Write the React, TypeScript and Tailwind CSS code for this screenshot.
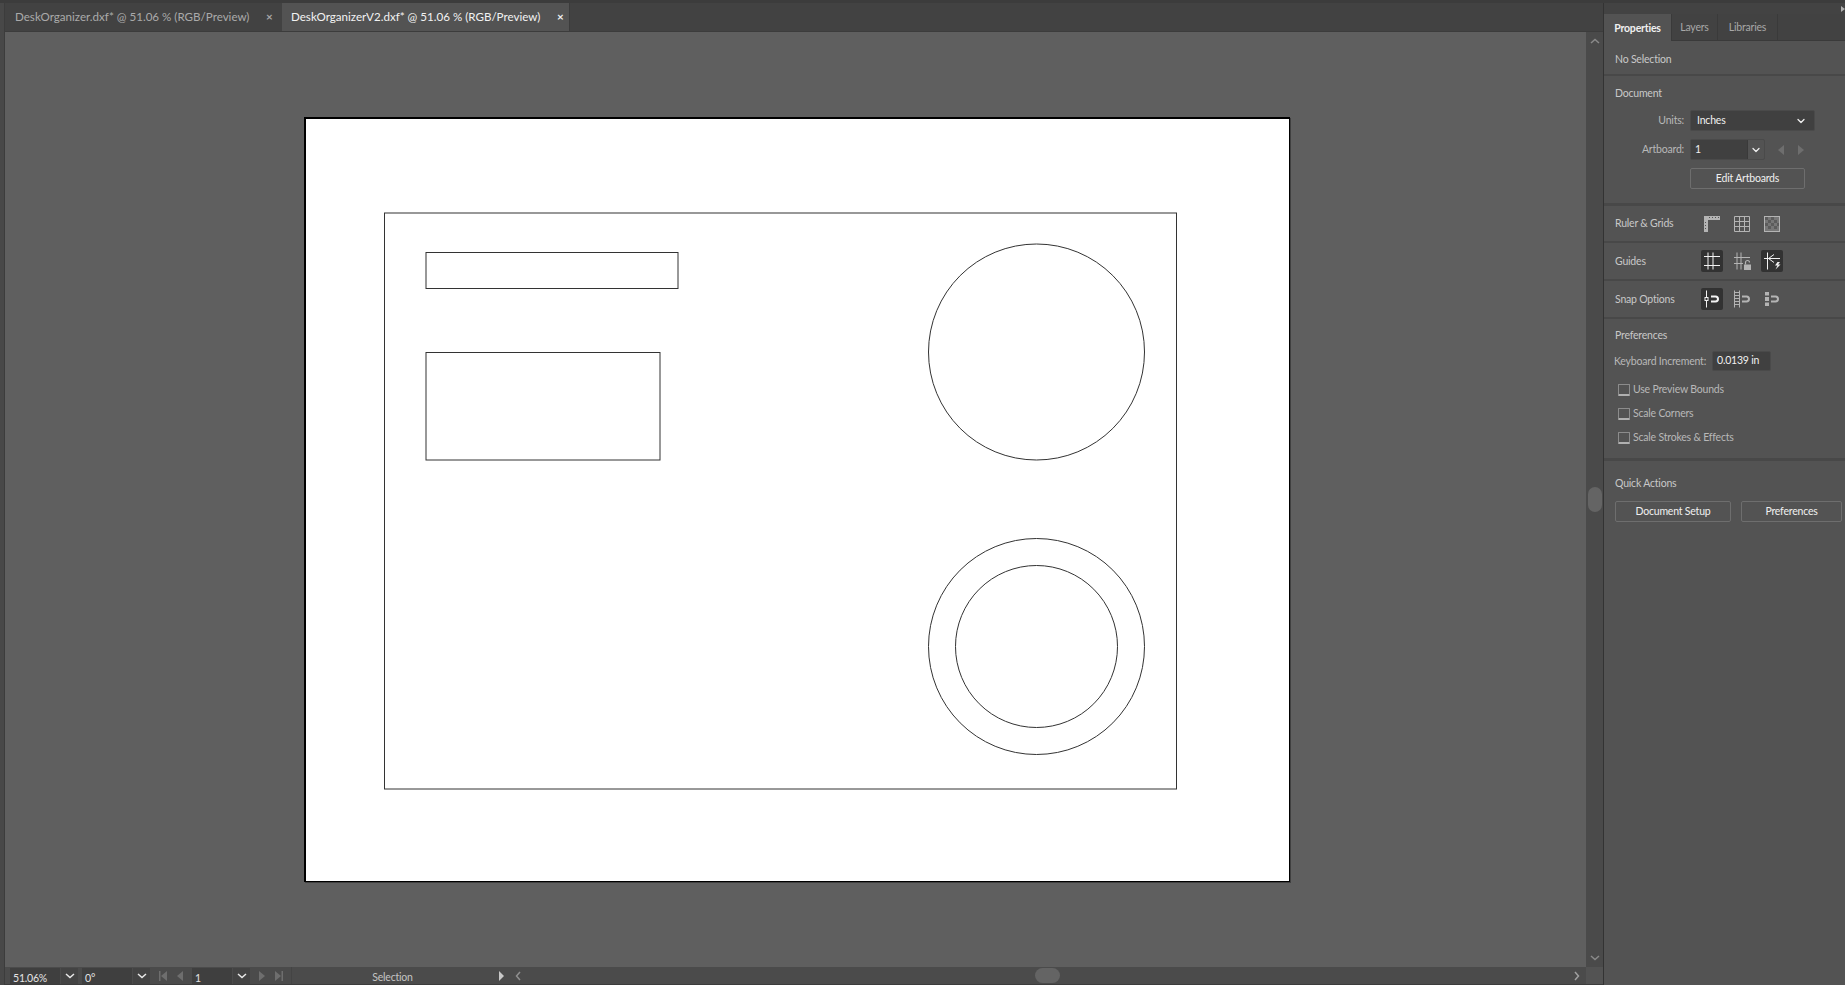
import React from 'react';
import { ChevronDown } from 'lucide-react';

const Chev = ({ className = '' }: { className?: string }) => (
  <svg width="10" height="6" viewBox="0 0 10 6" className={className} fill="none" stroke="currentColor" strokeWidth="1.5">
    <path d="M1 1l4 3.5L9 1" />
  </svg>
);

const Tri = ({ dir, bar = false }: { dir: 'l' | 'r'; bar?: boolean }) => (
  <svg width="9" height="10" viewBox="0 0 9 10" fill="#6e6e6e">
    {dir === 'l' ? <path d="M8 0v10L2 5z" /> : <path d="M1 0v10l6-5z" />}
    {bar && (dir === 'l' ? <rect x="0" y="0" width="1.5" height="10" /> : <rect x="7.5" y="0" width="1.5" height="10" />)}
  </svg>
);

const IconBox = ({ active = false, children }: { active?: boolean; children: React.ReactNode }) => (
  <div className={`w-[22px] h-[22px] rounded-[2px] flex items-center justify-center ${active ? 'bg-[#323232]' : ''}`}>
    <svg width="18" height="18" viewBox="0 0 18 18" fill="none" stroke={active ? '#f2f2f2' : '#b4b4b4'} strokeWidth="1">
      {children}
    </svg>
  </div>
);

const SectionRow = ({ label, h, children }: { label: string; h: string; children: React.ReactNode }) => (
  <div className={`${h} border-b-[2px] border-[#484848] flex items-center pl-[11px]`}>
    <span className="w-[86px] pt-[1px] text-[#c8c8c8]">{label}</span>
    <div className="flex gap-[8px]">{children}</div>
  </div>
);

const Check = ({ label }: { label: string }) => (
  <div className="flex items-center h-[24px] pl-[14px] gap-[3px] text-[#b8b8b8]">
    <div className="w-[12px] h-[12px] rounded-[1px] border border-[#8c8c8c] border-b-[#b0b0b0] border-b-2" />
    <span>{label}</span>
  </div>
);

const PanelButton = ({ className, label }: { className: string; label: string }) => (
  <div className={`h-[21px] pt-[1px] border-[1.5px] border-[#6e6e6e] rounded-[2px] flex items-center justify-center text-[#f0f0f0] ${className}`}>
    {label}
  </div>
);

const BarSelect = ({ value, w }: { value: string; w: string }) => (
  <div className="flex h-[16px] mt-[1px] text-[#e4e4e4]">
    <div className={`${w} bg-[#3f3f3f] pl-[3px] leading-[20px]`}>{value}</div>
    <div className="w-[17px] ml-[1px] bg-[#434343] flex items-center justify-center text-[#e8e8e8]">
      <Chev />
    </div>
  </div>
);

export default function App() {
  return (
    <div
      className="w-[1845px] h-[985px] overflow-hidden flex bg-[#3c3c3c] pt-[3px] text-[10.5px] tracking-[-0.2px]"
      style={{ fontFamily: '"Lato", "Liberation Sans", sans-serif' }}
    >
      <div className="w-[5px] bg-[#484848] border-r border-[#3c3c3c]" />

      {/* document area */}
      <div className="w-[1598px] flex flex-col">
        <div className="h-[29px] flex bg-[#424242] border-b border-[#3c3c3c] text-[11.6px] tracking-normal">
          <div className="w-[277px] flex items-center pl-[10px] text-[#aaaaaa]">
            <span className="w-[251px]">DeskOrganizer.dxf* @ 51.06 % (RGB/Preview)</span>
            <span className="font-bold text-[#a8a8a8]">×</span>
          </div>
          <div className="w-[288px] flex items-center pl-[9px] bg-[#535353] text-[#f2f2f2] border-r border-[#3c3c3c]">
            <span className="w-[266px]">DeskOrganizerV2.dxf* @ 51.06 % (RGB/Preview)</span>
            <span className="font-bold">×</span>
          </div>
        </div>

        <div className="flex-1 flex min-h-0">
          <div className="w-[1581px] bg-[#5f5f5f] pl-[299px] pt-[85px]">
            <div className="w-[986px] h-[765px] bg-white border-black border-t-2 border-l-2 border-r border-b shadow-[1px_1px_0_#404040]">
              <svg width="983" height="762" viewBox="306 119 983 762" fill="none" stroke="#333333" strokeWidth="1" className="block">
                <rect x="384.5" y="213" width="792" height="576" />
                <rect x="426" y="252.5" width="252" height="36" />
                <rect x="426" y="352.5" width="234" height="107.5" />
                <circle cx="1036.5" cy="352" r="108" />
                <circle cx="1036.5" cy="646.5" r="108" />
                <circle cx="1036.5" cy="646.5" r="81" />
              </svg>
            </div>
          </div>
          <div className="w-[17px] bg-[#4a4a4a] flex flex-col items-center justify-between pt-[6px] pb-[6px] text-[#8a8a8a]">
            <Chev className="rotate-180" />
            <div className="w-[14px] h-[25px] rounded-[7px] bg-[#646464]" />
            <Chev />
          </div>
        </div>

        {/* status bar */}
        <div className="h-[18px] bg-[#4b4b4b] border-b border-[#3c3c3c] flex pl-[5px]">
          <BarSelect value="51.06%" w="w-[50px]" />
          <div className="w-[4px]" />
          <BarSelect value="0°" w="w-[50px]" />
          <div className="w-[42px] flex items-center justify-end gap-[7px] pr-[8px]">
            <Tri dir="l" bar />
            <Tri dir="l" />
          </div>
          <BarSelect value="1" w="w-[40px]" />
          <div className="w-[42px] flex items-center justify-end gap-[7px] pr-[8px] border-r border-[#444444]">
            <Tri dir="r" />
            <Tri dir="r" bar />
          </div>
          <div className="w-[199px] pl-[2px] text-center text-[#c4c4c4] leading-[20px]">Selection</div>
          <div className="w-[18px] pl-[7px] flex items-center">
            <svg width="7" height="10" viewBox="0 0 7 10" fill="#c8c8c8"><path d="M1 0v10l5-5z" /></svg>
          </div>
          <div className="w-[17px] flex items-center justify-center text-[#8f8f8f]">
            <Chev className="rotate-90" />
          </div>
          <div className="w-[509px]" />
          <div className="w-[25px] h-[15px] mt-[1px] rounded-[8px] bg-[#646464]" />
          <div className="flex-1 flex items-center justify-end pr-[4px] text-[#a0a0a0]">
            <Chev className="-rotate-90" />
          </div>
          <div className="w-[17px] bg-[#535353]" />
        </div>
      </div>

      <div className="w-[1px] bg-[#333333]" />

      {/* properties panel */}
      <div className="w-[241px] flex flex-col bg-[#535353] text-[#c4c4c4]">
        <div className="h-[11px] bg-[#434343] flex items-center justify-end">
          <svg width="4" height="6" viewBox="0 0 4 6" fill="#b0b0b0"><path d="M0 0v6l4-3z" /></svg>
        </div>
        <div className="h-[27px] flex bg-[#424242] border-b border-[#3a3a3a]">
          <div className="w-[67px] -mb-[1px] pt-[2px] bg-[#535353] flex items-center justify-center text-[#f0f0f0] font-bold">Properties</div>
          <div className="w-[47px] pt-[2px] flex items-center justify-center border-l border-r border-[#3a3a3a] text-[#a8a8a8]">Layers</div>
          <div className="w-[60px] pt-[2px] flex items-center justify-center border-r border-[#3a3a3a] text-[#a8a8a8]">Libraries</div>
        </div>

        <div className="h-[35px] border-b-[2px] border-[#484848] pl-[11px] pt-[4px] flex items-center text-[#c8c8c8]">No Selection</div>

        <div className="h-[130px] border-b-[3px] border-[#484848] pl-[11px] pt-[10px] flex flex-col">
          <div className="text-[#c8c8c8] leading-[14px]">Document</div>
          <div className="flex items-center mt-[10px] h-[21px]">
            <span className="w-[75px] pr-[6px] pt-[1px] text-right text-[#b8b8b8]">Units:</span>
            <div className="w-[125px] h-[21px] pt-[1px] bg-[#404040] border border-[#4a4a4a] rounded-[2px] flex items-center justify-between pl-[6px] pr-[7px] text-[#f0f0f0]">
              Inches
              <ChevronDown size={12} strokeWidth={2.5} />
            </div>
          </div>
          <div className="flex items-center mt-[8px] h-[21px]">
            <span className="w-[75px] pr-[6px] pt-[1px] text-right text-[#b8b8b8]">Artboard:</span>
            <div className="w-[75px] h-[21px] flex border border-[#4a4a4a] rounded-[2px] text-[#f0f0f0]">
              <div className="w-[56px] bg-[#404040] pl-[4px] leading-[18px]">1</div>
              <div className="flex-1 flex items-center justify-center border-l border-[#3a3a3a]">
                <ChevronDown size={12} strokeWidth={2.5} />
              </div>
            </div>
            <div className="flex gap-[12px] ml-[11px]">
              <Tri dir="l" />
              <Tri dir="r" />
            </div>
          </div>
          <div className="flex mt-[8px] pl-[75px]">
            <PanelButton className="w-[115px]" label="Edit Artboards" />
          </div>
        </div>

        <SectionRow label="Ruler & Grids" h="h-[37px]">
          <IconBox>
            <path d="M1 1h16v4H5v12H1z" fill="#b4b4b4" stroke="none" />
            <path d="M6 2.5h1M9 2.5h1M12 2.5h1M15 2.5h1M2.5 7v1M2.5 10v1M2.5 13v1" stroke="#535353" />
          </IconBox>
          <IconBox>
            <path d="M1.5 1.5h15v15h-15zM6.5 1.5v15M11.5 1.5v15M1.5 6.5h15M1.5 11.5h15" />
          </IconBox>
          <IconBox>
            <rect x="1.5" y="1.5" width="15" height="15" fill="#777777" />
            <path d="M2 2h3v3H2zM8 2h3v3H8zM5 5h3v3H5zM11 5h3v3h-3zM2 8h3v3H2zM8 8h3v3H8zM14 8h2v3h-2zM5 11h3v3H5zM11 11h3v3h-3z" fill="#5c5c5c" stroke="none" />
          </IconBox>
        </SectionRow>
        <SectionRow label="Guides" h="h-[38px]">
          <IconBox active>
            <path d="M5 0.5v17M10 0.5v17M1 4.5h16M1 13.5h16" />
          </IconBox>
          <IconBox>
            <path d="M4 0.5v17M8 0.5v17M1 5.5h16M1 11.5h9" />
            <rect x="11" y="12.5" width="7" height="5.5" fill="#b4b4b4" stroke="none" />
            <path d="M12.5 12.5v-2a2 2 0 0 1 4 0" strokeWidth="1.2" />
          </IconBox>
          <IconBox active>
            <path d="M4.5 0.5v17M1 6.5h16M11 2.5L5.5 6.5L11 10.5" />
            <path d="M14.5 10l-2.5 3.5h2.5l-2 4 5-5h-2.5l2-2.5z" fill="#f2f2f2" stroke="none" />
          </IconBox>
        </SectionRow>
        <SectionRow label="Snap Options" h="h-[38px]">
          <IconBox active>
            <path d="M3.5 0.5v17" />
            <rect x="2" y="7.5" width="3" height="3" fill="#323232" />
            <path d="M8 6.5h4.5a2.5 2.5 0 0 1 0 5H8" strokeWidth="2" />
          </IconBox>
          <IconBox>
            <path d="M1.5 0.5v17M6.5 0.5v17M1.5 2.5h5M1.5 5.5h5M1.5 8.5h5M1.5 11.5h5M1.5 14.5h5" />
            <path d="M9 6.5h4.5a2.5 2.5 0 0 1 0 5H9" strokeWidth="2" />
          </IconBox>
          <IconBox>
            <path d="M2 2h4v3.5H2zM2 7h4v4H2zM2 12.5h4V16H2z" fill="#b4b4b4" stroke="none" />
            <path d="M8 6.5h4.5a2.5 2.5 0 0 1 0 5H8" strokeWidth="2" />
          </IconBox>
        </SectionRow>

        <div className="h-[142px] border-b-[3px] border-[#484848] pt-[9px] flex flex-col">
          <div className="pl-[11px] leading-[14px] text-[#c8c8c8]">Preferences</div>
          <div className="flex items-center mt-[9px] pl-[10px] h-[20px]">
            <span className="w-[98px] pt-[1px] whitespace-nowrap text-[#b8b8b8]">Keyboard Increment:</span>
            <div className="w-[59px] h-[20px] bg-[#404040] border border-[#4a4a4a] rounded-[2px] pl-[4px] leading-[16px] text-[#f0f0f0]">0.0139 in</div>
          </div>
          <div className="mt-[7px] flex flex-col">
            <Check label="Use Preview Bounds" />
            <Check label="Scale Corners" />
            <Check label="Scale Strokes & Effects" />
          </div>
        </div>

        <div className="pl-[11px] pt-[15px] flex flex-col">
          <div className="leading-[14px] text-[#c8c8c8]">Quick Actions</div>
          <div className="flex gap-[10px] mt-[11px]">
            <PanelButton className="w-[116px]" label="Document Setup" />
            <PanelButton className="w-[101px]" label="Preferences" />
          </div>
        </div>
      </div>
    </div>
  );
}
